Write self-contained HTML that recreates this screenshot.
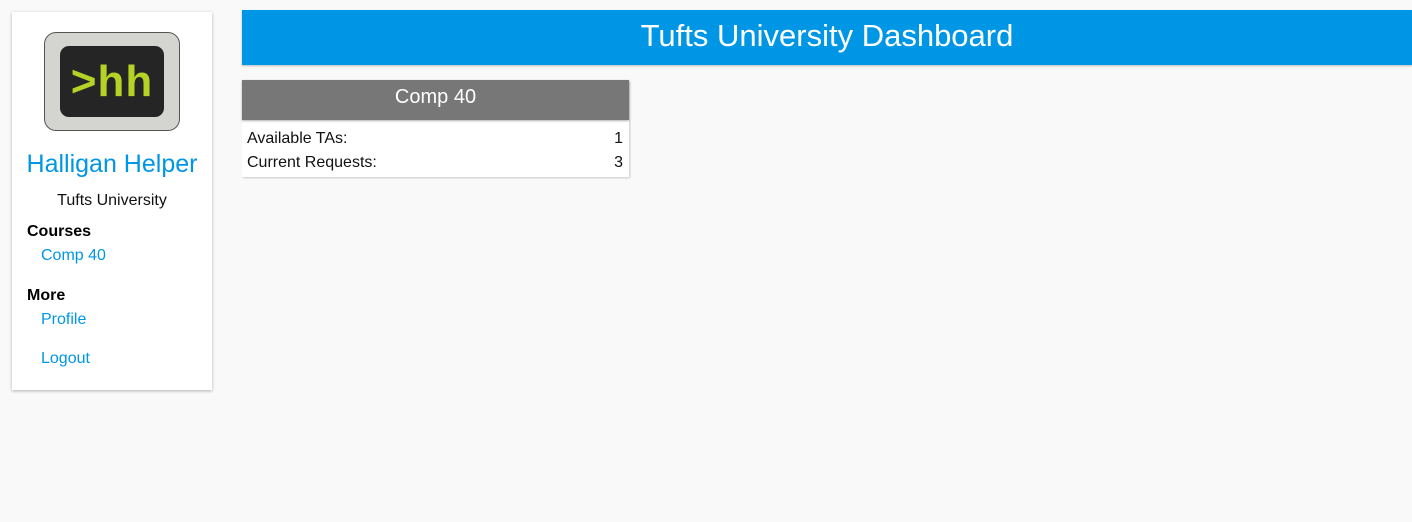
<!DOCTYPE html>
<html><head><style>
body{margin:0;background:#f9f9f9;font-family:"Liberation Sans",sans-serif;width:1412px;height:522px;overflow:hidden;position:relative}
.side{position:absolute;left:12px;top:12px;width:200px;height:378px;background:#fff;box-shadow:0 1px 3px rgba(0,0,0,.3)}
.logo{position:absolute;left:32px;top:20px;width:134px;height:97px;background:#d4d5d0;border:1px solid #555;border-radius:12px}
.logo .in{position:absolute;left:15px;top:13px;width:104px;height:71px;background:#252525;border-radius:9px;color:#b5d327;font-weight:bold;font-size:44px;line-height:71px;text-align:center;letter-spacing:1px}
.title{position:absolute;left:0;width:200px;top:138px;text-align:center;color:#0096e6;font-size:25px}
.uni{position:absolute;left:0;width:200px;top:180px;text-align:center;font-size:16px;color:#111}
.h{position:absolute;left:15px;font-weight:bold;font-size:16px;color:#000}
.l{position:absolute;left:29px;font-size:16px;color:#0096e6}
.hdr{position:absolute;left:242px;top:10px;width:1170px;height:55px;background:#0096e6;color:#fff;font-size:31px;text-align:center;line-height:51px;box-shadow:0 1px 2px rgba(0,0,0,.25)}
.card{position:absolute;left:242px;top:80px;width:387px;height:97px;background:#fff;box-shadow:1px 1px 2px rgba(0,0,0,.2)}
.ch{height:40px;background:#777;color:#fff;font-size:20px;text-align:center;line-height:34px;box-shadow:0 1px 2px rgba(0,0,0,.3)}
.row{position:absolute;left:5px;right:6px;font-size:16px;color:#111;display:flex;justify-content:space-between}
</style></head><body>
<div class="side">
<div class="logo"><div class="in">&gt;hh</div></div>
<div class="title">Halligan Helper</div>
<div class="uni">Tufts University</div>
<div class="h" style="top:211px">Courses</div>
<div class="l" style="top:235px">Comp 40</div>
<div class="h" style="top:275px">More</div>
<div class="l" style="top:299px">Profile</div>
<div class="l" style="top:338px">Logout</div>
</div>
<div class="hdr">Tufts University Dashboard</div>
<div class="card"><div class="ch">Comp 40</div>
<div class="row" style="top:50px"><span>Available TAs:</span><span>1</span></div>
<div class="row" style="top:74px"><span>Current Requests:</span><span>3</span></div>
</div>
</body></html>
